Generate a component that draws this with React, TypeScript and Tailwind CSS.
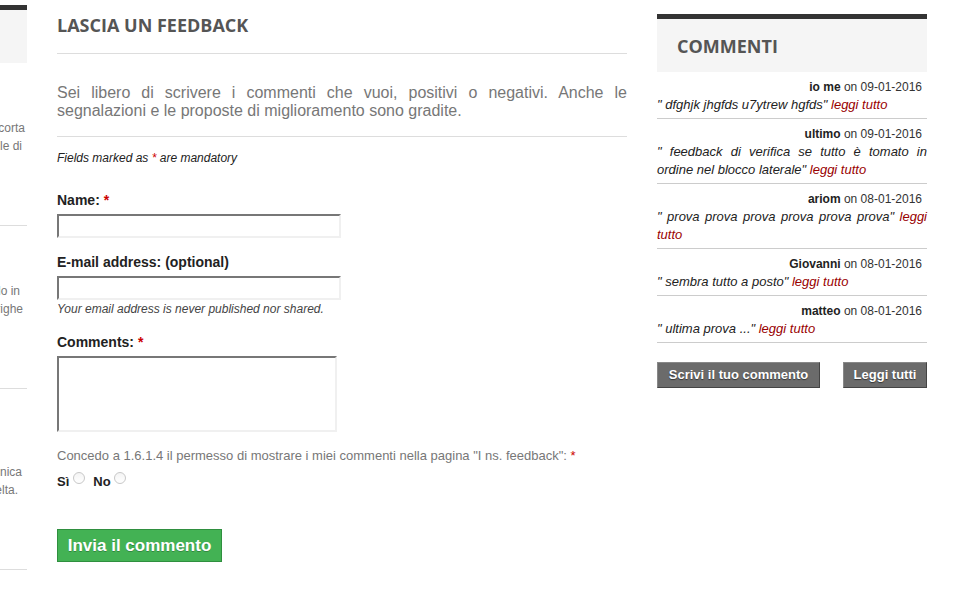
import React from 'react';

const comments = [
  { author: 'io me', date: '09-01-2016', text: 'dfghjk jhgfds u7ytrew hgfds' },
  { author: 'ultimo', date: '09-01-2016', text: 'feedback di verifica se tutto è tomato in ordine nel blocco laterale' },
  { author: 'ariom', date: '08-01-2016', text: 'prova prova prova prova prova prova' },
  { author: 'Giovanni', date: '08-01-2016', text: 'sembra tutto a posto' },
  { author: 'matteo', date: '08-01-2016', text: 'ultima prova ...' },
];

// lines of the clipped left sidebar; only their right ends are visible
const sideBlocks = [
  {
    mt: 'mt-[56px]',
    lines: [
      { t: 'Con il nostro servizio riceverai una scorta', pr: 'pr-[2px]' },
      { t: 'di ricambi originali tra tutte le di', pr: 'pr-[5px]' },
    ],
  },
  {
    mt: 'mt-[56px]',
    lines: [
      { t: 'Tutti i prodotti sono disponibili, solo in', pr: 'pr-[7px]' },
      { t: 'negozio o spediti in tempi brevi, righe', pr: 'pr-[4px]' },
    ],
  },
  {
    mt: 'mt-[74px]',
    lines: [
      { t: 'Il nostro staff offre assistenza tecnica', pr: 'pr-[5px]' },
      { t: 'per ogni esigenza e ogni tua scelta.', pr: 'pr-[9px]' },
    ],
  },
];

const Star = () => <span className="text-[#c00]">*</span>;

const inputCls =
  'block h-[24px] border-2 border-t-[#777] border-l-[#777] border-r-[#f0f0f0] border-b-[#f0f0f0] bg-white';

const Radio = () => (
  <span className="inline-block h-[12px] w-[12px] rounded-full border border-[#c8c8c8] bg-gradient-to-b from-[#f4f4f4] to-white align-[2px]" />
);

const greyBtn =
  'h-[26px] border border-[#444] border-t-[#888] border-l-[#888] bg-[#6b6b6b] text-[13px] font-bold text-white [text-shadow:0_1px_1px_rgba(0,0,0,0.5)]';

export default function App() {
  return (
    <div className="flex min-h-[607px] w-[963px] bg-white font-['Liberation_Sans',Arial,sans-serif]">
      {/* clipped left sidebar */}
      <div className="w-[27px] shrink-0 overflow-hidden">
        <div className="mt-[5px] h-[5px] bg-[#333]" />
        <div className="h-[53px] bg-[#f5f5f5]" />
        {sideBlocks.map((b, i) => (
          <div key={i} className={b.mt}>
            <div className="-ml-[243px] w-[270px] text-right text-[12px] leading-[18px] text-[#777]">
              {b.lines.map((l) => (
                <div key={l.t} className={`whitespace-nowrap ${l.pr}`}>{l.t}</div>
              ))}
            </div>
            <div className="mt-[70px] h-px bg-[#ddd]" />
          </div>
        ))}
      </div>

      {/* main form */}
      <div className="ml-[30px] w-[570px] shrink-0">
        <h2 className="mt-[13px] border-b border-[#ddd] pb-[16px] font-['Open_Sans',sans-serif] text-[18px] font-bold leading-[24px] text-[#555]">
          LASCIA UN FEEDBACK
        </h2>
        <p className="mt-[30px] border-b border-[#ddd] pb-[16px] text-justify text-[16px] leading-[18px] text-[#777]">
          Sei libero di scrivere i commenti che vuoi, positivi o negativi. Anche le segnalazioni e le proposte di miglioramento sono gradite.
        </p>
        <p className="mt-[12px] text-[12px] italic leading-[18px] text-[#222]">
          Fields marked as <Star /> are mandatory
        </p>

        <label className="mt-[24px] block text-[14px] font-bold leading-[18px] text-[#222]">
          Name: <Star />
        </label>
        <div className={`${inputCls} mt-[5px] w-[284px]`} />

        <label className="mt-[15px] block text-[14px] font-bold leading-[18px] text-[#222]">
          E-mail address: (optional)
        </label>
        <div className={`${inputCls} mt-[5px] w-[284px]`} />
        <p className="text-[12px] italic leading-[18px] text-[#444]">Your email address is never published nor shared.</p>

        <label className="mt-[15px] block text-[14px] font-bold leading-[18px] text-[#222]">
          Comments: <Star />
        </label>
        <div className="mt-[5px] h-[76px] w-[280px] border-2 border-t-[#777] border-l-[#777] border-r-[#f0f0f0] border-b-[#f0f0f0] bg-white" />

        <p className="mt-[15px] text-[13px] leading-[18px] text-[#777]">
          Concedo a 1.6.1.4 il permesso di mostrare i miei commenti nella pagina "I ns. feedback": <Star />
        </p>
        <div className="mt-[7px] flex items-center text-[13px] font-bold leading-[18px] text-[#222]">
          <span>Sì</span>
          <span className="ml-[4px]"><Radio /></span>
          <span className="ml-[8px]">No</span>
          <span className="ml-[3px]"><Radio /></span>
        </div>

        <button className="mt-[38px] flex h-[33px] w-[165px] items-center justify-center border border-[#2f8f3f] bg-[#43b254] text-[17px] font-bold text-white [text-shadow:0_1px_0_rgba(0,0,0,0.25)]">
          Invia il commento
        </button>
      </div>

      {/* right sidebar */}
      <div className="ml-[30px] w-[270px] shrink-0">
        <div className="mt-[14px] h-[5px] bg-[#333]" />
        <div className="flex h-[53px] items-center bg-[#f5f5f5] pl-[20px]">
          <h3 className="font-['Open_Sans',sans-serif] text-[18px] font-bold leading-[24px] text-[#555]">COMMENTI</h3>
        </div>
        {comments.map((c) => (
          <div key={c.author} className="border-b border-[#ccc] pb-[4px] pt-[6px] leading-[18px]">
            <div className="pr-[5px] text-right text-[12px] text-[#333]">
              <b className="text-[#222]">{c.author}</b> on {c.date}
            </div>
            <p className="text-justify text-[13px] italic leading-[18px] text-[#222]">
              " {c.text}" <a className="text-[#990000]">leggi tutto</a>
            </p>
          </div>
        ))}
        <div className="mt-[19px] flex justify-between">
          <button className={`${greyBtn} w-[163px]`}>Scrivi il tuo commento</button>
          <button className={`${greyBtn} w-[84px]`}>Leggi tutti</button>
        </div>
      </div>
    </div>
  );
}
